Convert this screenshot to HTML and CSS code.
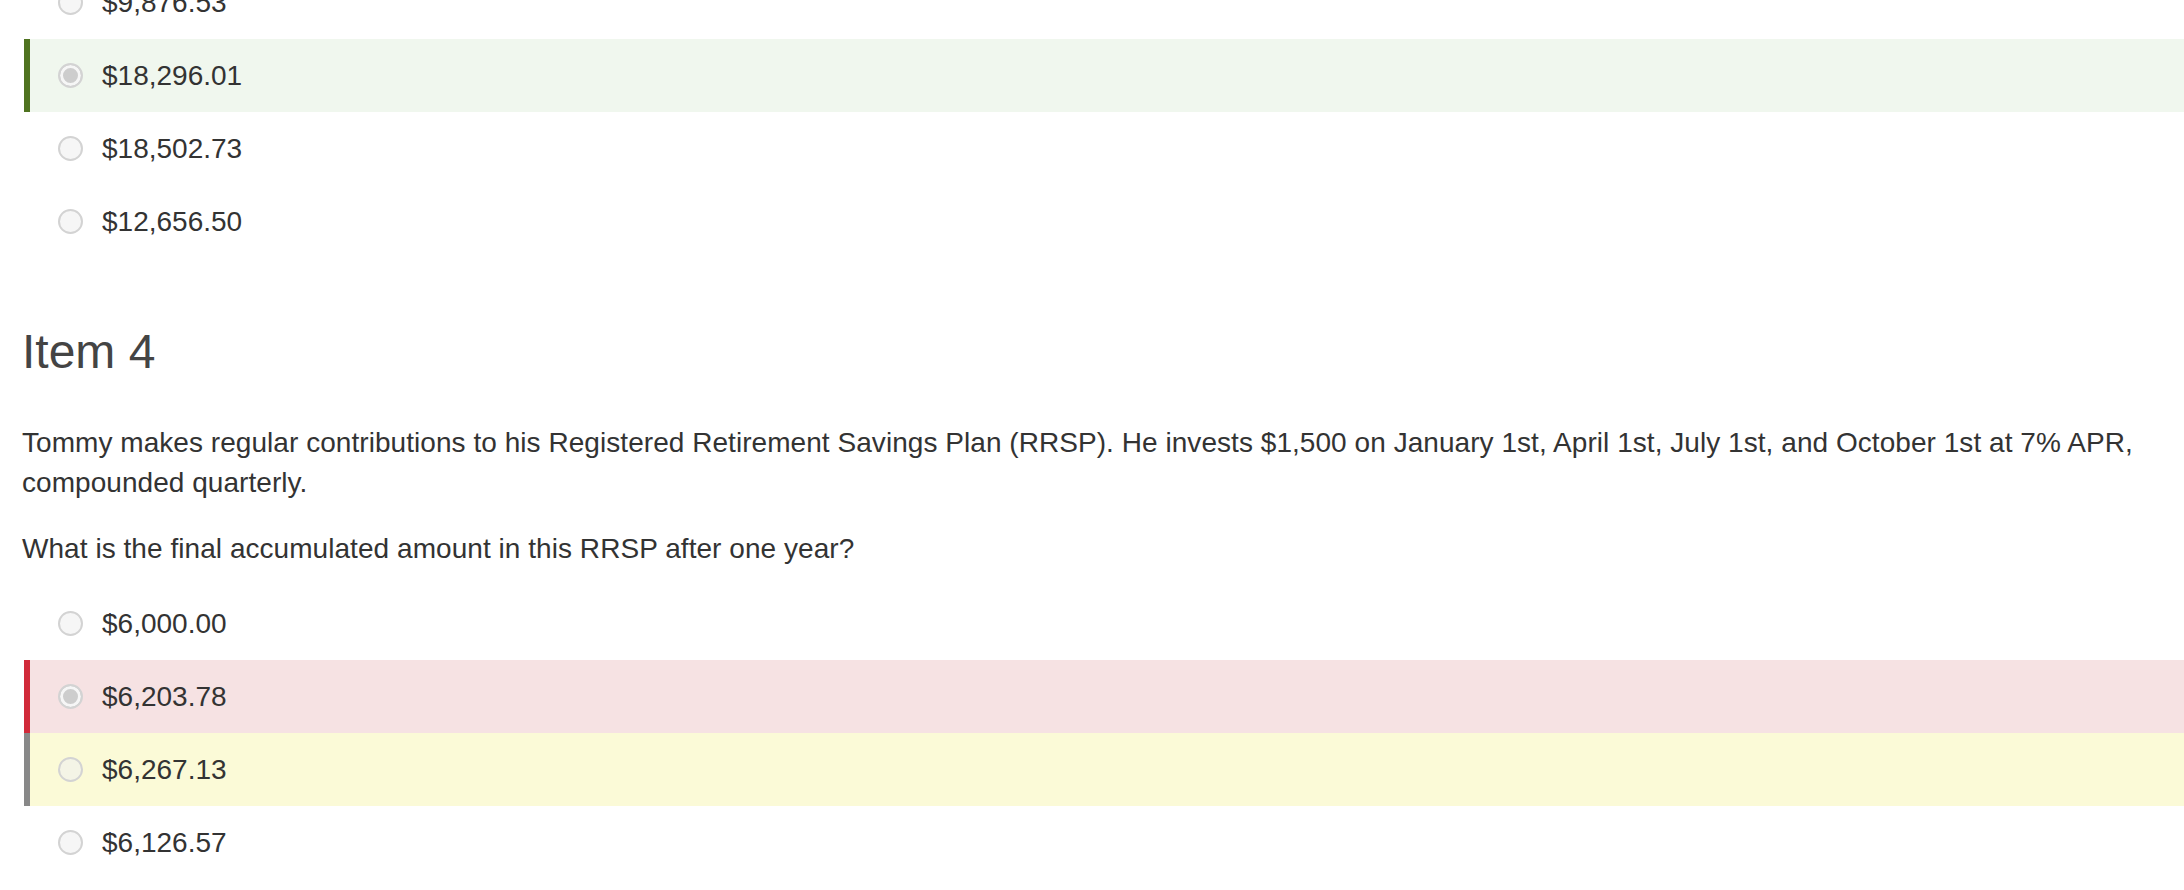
FILE: index.html
```html
<!DOCTYPE html>
<html>
<head>
    <meta charset="utf-8">
    <title>Quiz review</title>
    <link rel="stylesheet" href="styles.css">
</head>
<body>
    <div class="quiz">
        <!-- Item 3 (answers only, scrolled) -->
        <div class="options">
            <label class="option"><input type="radio" name="q3" disabled> $9,876.53</label>
            <label class="option correct"><input type="radio" name="q3" checked disabled> $18,296.01</label>
            <label class="option"><input type="radio" name="q3" disabled> $18,502.73</label>
            <label class="option"><input type="radio" name="q3" disabled> $12,656.50</label>
        </div>

        <div class="item">
            <h2 class="item-title">Item 4</h2>
            <p class="item-text">Tommy makes regular contributions to his Registered Retirement Savings Plan (RRSP). He invests $1,500 on January 1st, April 1st, July 1st, and October 1st at 7% APR, compounded quarterly.</p>
            <p class="item-text question">What is the final accumulated amount in this RRSP after one year?</p>
            <div class="options">
                <label class="option"><input type="radio" name="q4" disabled> $6,000.00</label>
                <label class="option wrong"><input type="radio" name="q4" checked disabled> $6,203.78</label>
                <label class="option missed"><input type="radio" name="q4" disabled> $6,267.13</label>
                <label class="option"><input type="radio" name="q4" disabled> $6,126.57</label>
            </div>
        </div>
    </div>
</body>
</html>
```

FILE: styles.css
```css
body {
    margin: 0;
    font-family: "Liberation Sans", Arial, sans-serif;
    color: #333;
    background: #fff;
    overflow: hidden;
}

.quiz {
    margin-top: -34px;
    padding-left: 22px;
}

.options {
    margin-left: 2px;
}

.option {
    display: flex;
    align-items: center;
    gap: 19px;
    height: 73px;
    padding-left: 28px;
    border-left: 6px solid transparent;
    font-size: 28px;
}

.option input {
    appearance: none;
    -webkit-appearance: none;
    margin: 0;
    width: 25px;
    height: 25px;
    border: 2px solid #d3d3d3;
    border-radius: 50%;
    background: rgba(240,240,240,0.6);
    box-sizing: border-box;
}

.option input:checked {
    background: #cdcdcd;
    box-shadow: inset 0 0 0 3px #f6f6f6;
}

.option.correct {
    background: #f0f7ee;
    border-left-color: #4f7320;
}

.option.wrong {
    background: #f6e2e3;
    border-left-color: #d12a3a;
}

.option.missed {
    background: #fbfad7;
    border-left-color: #888;
}

.item-title {
    margin: 64px 0 0 0;
    font-size: 48px;
    line-height: 60px;
    font-weight: normal;
    color: #444;
}

.item-text {
    margin: 41px 0 0 0;
    font-size: 28px;
    line-height: 40px;
    letter-spacing: 0.05px;
    padding-right: 20px;
}

.item-text.question {
    margin-top: 26px;
    margin-bottom: 18px;
}
```
